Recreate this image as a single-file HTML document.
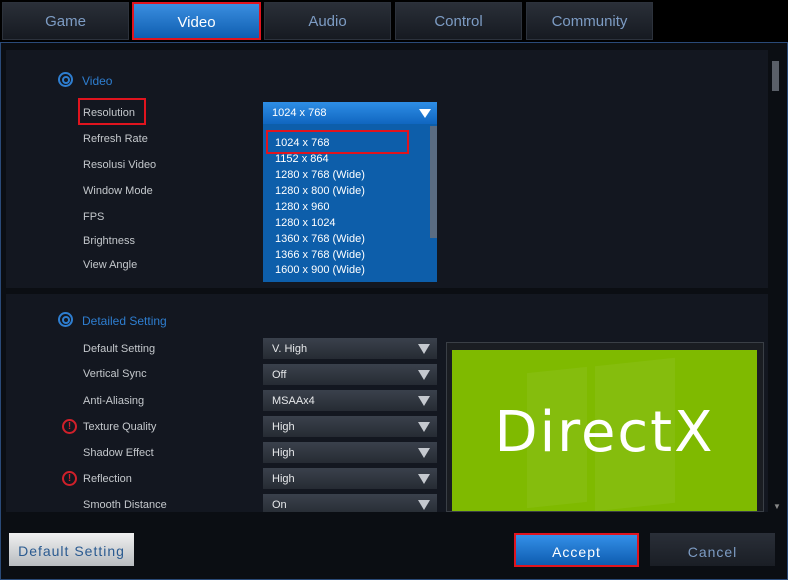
<!DOCTYPE html>
<html><head><style>
*{margin:0;padding:0;box-sizing:border-box}
body{width:788px;height:580px;background:#000;position:relative;overflow:hidden;font-family:"Liberation Sans",sans-serif}
.a{position:absolute}
.tab{position:absolute;top:2px;height:38px;background:linear-gradient(#2a2f38,#161a21);border:1px solid #2c323c;color:#7d9cc4;font-size:15px;text-align:center;line-height:37px}
.lbl{position:absolute;left:83px;color:#c4c8cc;font-size:11px}
.sel{position:absolute;left:263px;width:174px;height:21px;background:linear-gradient(#3a414c,#262b33);color:#e6e8ea;font-size:11px;line-height:23px;padding-left:9px}
.sel:after{content:"";position:absolute;right:7px;top:6px;border-left:6px solid transparent;border-right:6px solid transparent;border-top:10px solid #c5c9cf}
.opt{position:absolute;left:275px;color:#fff;font-size:11px}
.warn{position:absolute;left:62px;width:15px;height:15px;border:2px solid #d0202a;border-radius:50%;color:#d0202a;font-size:10px;font-weight:bold;text-align:center;line-height:11px}
.tgt{position:absolute;left:58px;width:15px;height:15px;border-radius:50%;border:2px solid #2e7ed0}
.tgt:after{content:"";position:absolute;left:2px;top:2px;width:4px;height:4px;border:2px solid #2e7ed0;border-radius:50%}
</style></head><body>
<div class="tab" style="left:2px;width:127px">Game</div>
<div class="tab" style="left:132px;width:129px;background:linear-gradient(#3a8ee0,#0f5eb0);color:#fff;border:2px solid #e0141e">Video</div>
<div class="tab" style="left:264px;width:127px">Audio</div>
<div class="tab" style="left:395px;width:127px">Control</div>
<div class="tab" style="left:526px;width:127px">Community</div>
<div class="a" style="left:0;top:42px;width:788px;height:538px;border:1px solid #2a4a78;background:#0b0e13"></div>
<div class="a" style="left:6px;top:50px;width:762px;height:238px;background:#131720"></div>
<div class="a" style="left:6px;top:294px;width:762px;height:218px;background:#131720"></div>
<div class="a" style="left:772px;top:52px;width:8px;height:458px;background:#0b0e13"></div>
<div class="a" style="left:772px;top:61px;width:7px;height:30px;background:#5a5f68"></div>
<div class="a" style="left:773px;top:502px;color:#888;font-size:8px">▼</div>
<div class="tgt" style="top:72px"></div>
<div class="a" style="left:82px;top:74px;color:#2e7ed0;font-size:12px">Video</div>
<div class="lbl" style="top:107px">Resolution</div>
<div class="a" style="left:78px;top:98px;width:68px;height:27px;border:2px solid #e0141e"></div>
<div class="lbl" style="top:133px">Refresh Rate</div>
<div class="lbl" style="top:159px">Resolusi Video</div>
<div class="lbl" style="top:185px">Window Mode</div>
<div class="lbl" style="top:211px">FPS</div>
<div class="lbl" style="top:235px">Brightness</div>
<div class="lbl" style="top:259px">View Angle</div>
<div class="a" style="left:263px;top:102px;width:174px;height:22px;background:linear-gradient(#2e8ee6,#1066c0);color:#fff;font-size:11px;line-height:22px;padding-left:9px">1024 x 768<span style="position:absolute;right:6px;top:7px;border-left:6px solid transparent;border-right:6px solid transparent;border-top:9px solid #fff"></span></div>
<div class="a" style="left:263px;top:124px;width:174px;height:158px;background:#0d5eaa;overflow:hidden"></div>
<div class="a" style="left:430px;top:126px;width:7px;height:112px;background:#5a6c82"></div>
<div class="a" style="left:266px;top:130px;width:143px;height:24px;border:2px solid #e0141e"></div>
<div class="opt" style="top:137px">1024 x 768</div>
<div class="opt" style="top:153px">1152 x 864</div>
<div class="opt" style="top:169px">1280 x 768 (Wide)</div>
<div class="opt" style="top:185px">1280 x 800 (Wide)</div>
<div class="opt" style="top:201px">1280 x 960</div>
<div class="opt" style="top:217px">1280 x 1024</div>
<div class="opt" style="top:233px">1360 x 768 (Wide)</div>
<div class="opt" style="top:249px">1366 x 768 (Wide)</div>
<div class="a" style="left:263px;top:263px;width:166px;height:13px;overflow:hidden"><div class="opt" style="left:12px;top:1px">1600 x 900 (Wide)</div></div>
<div class="tgt" style="top:312px"></div>
<div class="a" style="left:82px;top:314px;color:#2e7ed0;font-size:12px">Detailed Setting</div>
<div class="lbl" style="top:343px">Default Setting</div>
<div class="lbl" style="top:368px">Vertical Sync</div>
<div class="lbl" style="top:395px">Anti-Aliasing</div>
<div class="warn" style="top:419px">!</div>
<div class="lbl" style="top:421px">Texture Quality</div>
<div class="lbl" style="top:447px">Shadow Effect</div>
<div class="warn" style="top:471px">!</div>
<div class="lbl" style="top:473px">Reflection</div>
<div class="lbl" style="top:499px">Smooth Distance</div>
<div class="sel" style="top:338px">V. High</div>
<div class="sel" style="top:364px">Off</div>
<div class="sel" style="top:390px">MSAAx4</div>
<div class="sel" style="top:416px">High</div>
<div class="sel" style="top:442px">High</div>
<div class="sel" style="top:468px">High</div>
<div class="a" style="left:263px;top:494px;width:174px;height:18px;overflow:hidden"><div class="sel" style="left:0;top:0">On</div></div>
<div class="a" style="left:446px;top:342px;width:318px;height:170px;background:#1a1d22;border:1px solid #3a3f46"></div>
<div class="a" style="left:452px;top:350px;width:305px;height:161px;background:#7fba00;overflow:hidden">
<div class="a" style="left:75px;top:20px;width:60px;height:135px;background:rgba(255,255,255,0.05);transform:skewY(-6deg)"></div>
<div class="a" style="left:143px;top:12px;width:80px;height:145px;background:rgba(255,255,255,0.05);transform:skewY(-6deg)"></div>
<div class="a" style="left:0;top:50px;width:305px;text-align:center;color:#fff;font-size:56px;font-family:'DejaVu Sans',sans-serif;letter-spacing:2px">DirectX</div>
</div>
<div class="a" style="left:9px;top:533px;width:125px;height:33px;background:linear-gradient(#f0f0f0,#b8bcc0);color:#2a5a90;font-size:14px;text-align:center;line-height:36px;letter-spacing:1px">Default Setting</div>
<div class="a" style="left:514px;top:533px;width:125px;height:34px;background:linear-gradient(#3490e8,#0e5cb0);border:2px solid #e0141e;color:#fff;font-size:14px;text-align:center;line-height:34px;letter-spacing:1px">Accept</div>
<div class="a" style="left:650px;top:533px;width:125px;height:33px;background:linear-gradient(#2a2f38,#1a1e25);color:#7d9cc4;font-size:14px;text-align:center;line-height:38px;letter-spacing:1px">Cancel</div>
</body></html>
